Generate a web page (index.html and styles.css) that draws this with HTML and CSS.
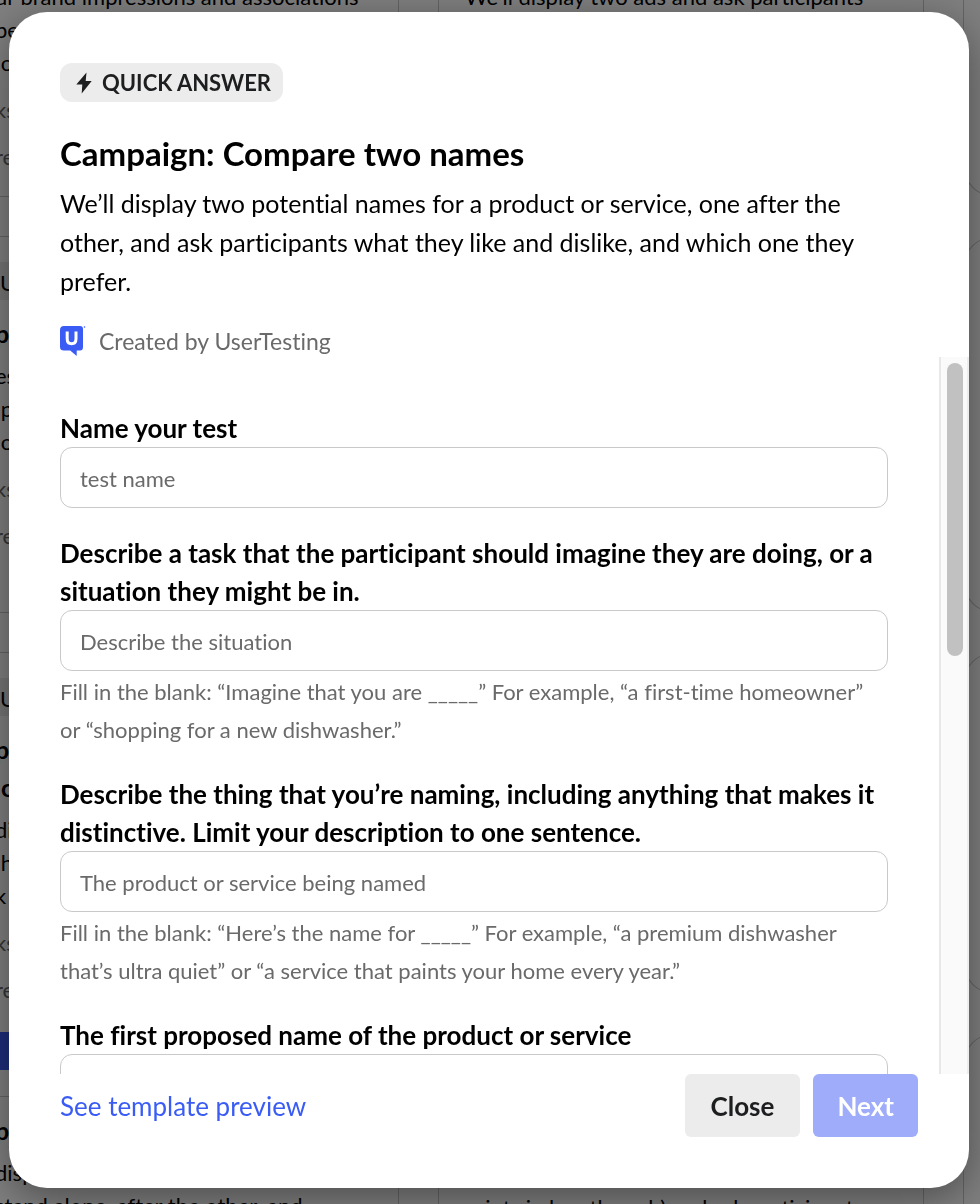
FILE: index.html
```html
<!DOCTYPE html>
<html lang="en">
<head>
    <meta charset="UTF-8">
    <meta name="viewport" content="width=device-width, initial-scale=1.0">
    <title>Campaign: Compare two names</title>
    <link rel="stylesheet" href="styles.css">
</head>
<body>
    <!-- Template gallery behind the dialog -->
    <div class="gallery" aria-hidden="true">
        <div class="column column-first">
            <div class="card card-cut">
                <p class="card-text">ur brand impressions and associations<br>pe<br>&nbsp;o</p>
                <p class="card-meta">ks</p>
                <p class="card-meta">re</p>
            </div>
            <div class="card">
                <div class="card-badge">U</div>
                <h3>pa</h3>
                <p class="card-text">es<br>&nbsp;p<br>&nbsp;o</p>
                <p class="card-meta">ks</p>
                <p class="card-meta">re</p>
            </div>
            <div class="card card-tall">
                <div class="card-badge">U</div>
                <h3>pa<br>&nbsp;c</h3>
                <p class="card-text">di<br>&nbsp;h<br>k</p>
                <p class="card-meta">ks</p>
                <p class="card-meta">re</p>
                <div class="card-button"></div>
                <div class="card-more">
                    <h3>pa</h3>
                    <p class="card-text">disp<br>stand alone, after the other, and</p>
                </div>
            </div>
        </div>
        <div class="column">
            <div class="card card-full">
                <p class="card-text">We’ll display two ads and ask participants</p>
                <p class="card-text">prints in length each) and ask participants</p>
            </div>
        </div>
        <div class="column column-last">
            <div class="card card-cut"></div>
            <div class="card"></div>
            <div class="card"></div>
            <div class="card card-tall"></div>
        </div>
    </div>

    <div class="overlay">
        <div class="modal" role="dialog" aria-labelledby="modalTitle">
            <div class="modal-header">
                <div class="badge">
                    <svg width="18" height="22" viewBox="0 0 18 22"><path d="M11.5 0.5 1.3 12.4h6L6.7 21.5 16.7 9h-6z" fill="#1d1e1f"/></svg>
                    QUICK ANSWER
                </div>
                <h1 id="modalTitle">Campaign: Compare two names</h1>
                <p class="description">We’ll display two potential names for a product or service, one after the other, and ask participants what they like and dislike, and which one they prefer.</p>
                <div class="author">
                    <svg width="26" height="30" viewBox="0 0 26 30">
                        <path d="M4 0h16q3 0 3 3v18q0 3.500-3 3.500h-3.300V30l-6.500-5.500H4q-4 0-4-3.500V4q0-4 4-4z" fill="#3a5cf5"/>
                        <path d="M7.200 5.500v7.300q0 5 4.400 5t4.400-5V5.500" fill="none" stroke="#fff" stroke-width="3"/>
                        <circle cx="24.500" cy="1" r="0.800" fill="#3a5cf5"/>
                    </svg>
                    <span>Created by UserTesting</span>
                </div>
            </div>

            <div class="modal-body">
                <form class="form" id="testForm">
                    <div class="form-group">
                        <label for="testName">Name your test</label>
                        <input type="text" id="testName" placeholder="test name">
                    </div>
                    <div class="form-group">
                        <label for="situation">Describe a task that the participant should imagine they are doing, or a situation they might be in.</label>
                        <input type="text" id="situation" placeholder="Describe the situation">
                        <p class="hint">Fill in the blank: “Imagine that you are _____” For example, “a first-time homeowner” or “shopping for a new dishwasher.”</p>
                    </div>
                    <div class="form-group">
                        <label for="product">Describe the thing that you’re naming, including anything that makes it distinctive. Limit your description to one sentence.</label>
                        <input type="text" id="product" placeholder="The product or service being named">
                        <p class="hint">Fill in the blank: “Here’s the name for _____” For example, “a premium dishwasher that’s ultra quiet” or “a service that paints your home every year.”</p>
                    </div>
                    <div class="form-group">
                        <label for="firstName">The first proposed name of the product or service</label>
                        <input type="text" id="firstName">
                    </div>
                </form>
                <div class="scroll-track"><div class="scroll-thumb"></div></div>
            </div>

            <div class="modal-footer">
                <a href="#preview">See template preview</a>
                <div class="actions">
                    <button type="button" class="btn">Close</button>
                    <button type="submit" class="btn btn-primary" form="testForm" disabled>Next</button>
                </div>
            </div>
        </div>
    </div>
</body>
</html>
```
FILE: styles.css
```css
* {
    box-sizing: border-box;
}

body {
    margin: 0;
    height: 100vh;
    overflow: hidden;
    font-family: Lato, "Liberation Sans", sans-serif;
    font-variant-ligatures: none;
    color: #000;
}

h1, h3, p {
    margin: 0;
}

/* gallery */
.gallery {
    display: grid;
    grid-template-columns: 399px 1fr 17px;
    column-gap: 39px;
    height: 100vh;
    overflow: hidden;
    background: #fff;
    font-size: 22px;
    line-height: 33px;
}

.column {
    min-width: 0;
    display: flex;
    flex-direction: column;
    gap: 39px;
}

.card {
    flex: none;
    height: 377px;
    padding-top: 25px;
    border: 1px solid #c9c9c9;
    white-space: nowrap;
    overflow: hidden;
}

.column-first .card {
    border-left: none;
}

.column-first p,
.column-first h3 {
    margin-left: -5px;
}

.column-last .card {
    border-right: none;
    border-radius: 32px 0 0 32px;
    width: 60px;
    height: 342px;
}

.column-last .card:nth-child(2) {
    height: 377px;
}

.gallery .card-cut {
    height: 197px;
    padding-top: 0;
    border-top: none;
    border-radius: 0;
}

.column-last .card-cut {
    border-radius: 0 0 0 32px;
}

.card-cut .card-text {
    margin-top: -20px;
}

.column-first .card-tall {
    height: 620px;
}

.card-full {
    height: 100vh;
    padding: 0 0 0 26px;
    border-top: none;
    border-bottom: none;
    display: flex;
    flex-direction: column;
    justify-content: space-between;
}

.card-full .card-text {
    margin: -20px 0;
}

.card-badge {
    height: 38px;
    line-height: 42px;
    background: #ececec;
    margin-bottom: 14px;
}

.card h3 {
    font-size: 25px;
    line-height: 38px;
    margin-bottom: 7px;
}

.card-meta {
    color: #6a6a6a;
    margin-top: 14px;
}

.card-button {
    height: 38px;
    margin-top: 26px;
    background: #3a5cf5;
}

.card-more {
    margin-top: 26px;
    padding-top: 14px;
    border-top: 1px solid #c9c9c9;
}

/* dialog */
.overlay {
    position: fixed;
    inset: 0;
    display: flex;
    padding: 12px 11px 16px 9px;
    background: rgba(0, 0, 0, 0.5);
}

.modal {
    flex: 1;
    min-width: 0;
    display: flex;
    flex-direction: column;
    background: #fff;
    border-radius: 38px;
    overflow: hidden;
    box-shadow: 0 10px 40px rgba(0, 0, 0, 0.4);
}

.modal-header {
    padding: 51px 81px 0 51px;
}

.badge {
    display: inline-flex;
    align-items: center;
    gap: 9px;
    height: 39px;
    padding: 0 12px 0 15px;
    border-radius: 12px;
    background: #ececec;
    color: #1d1e1f;
    font-size: 22px;
    font-weight: bold;
}

h1 {
    margin-top: 30px;
    font-size: 33px;
    line-height: 42px;
}

.description {
    margin-top: 10px;
    font-size: 25px;
    line-height: 39px;
}

.author {
    display: flex;
    align-items: center;
    gap: 13px;
    height: 32px;
    margin-top: 24px;
    font-size: 23px;
    color: #6a6a6a;
}

.modal-body {
    flex: 1;
    min-height: 0;
    display: flex;
}

.form {
    flex: 1;
    min-width: 0;
    padding: 52px 51px 0;
    overflow: hidden;
    display: flex;
    flex-direction: column;
    gap: 26px;
}

.form-group label {
    display: block;
    font-size: 26px;
    font-weight: bold;
    line-height: 38px;
}

.form-group input {
    display: block;
    width: 100%;
    height: 61px;
    padding: 1px 19px 0;
    border: 1px solid #c9c9c9;
    border-radius: 12px;
    background: #fff;
    font-family: inherit;
    font-variant-ligatures: none;
    font-size: 22px;
}

.form-group input::placeholder {
    color: #6a6a6a;
}

.hint {
    margin-top: 2px;
    font-size: 22px;
    line-height: 38px;
    color: #6a6a6a;
}

.scroll-track {
    width: 30px;
    padding: 6px;
    border-left: 2px solid #e8e8e8;
    border-right: 2px solid #ededed;
    background: #fafafa;
}

.scroll-thumb {
    width: 16px;
    height: 293px;
    border-radius: 8px;
    background: #c1c1c1;
}

.modal-footer {
    display: flex;
    align-items: center;
    justify-content: space-between;
    padding: 0 51px 51px;
}

.modal-footer a {
    color: #3a5cf5;
    font-size: 26px;
    text-decoration: none;
}

.actions {
    display: flex;
    gap: 13px;
}

.btn {
    height: 63px;
    padding: 0 26px;
    border: none;
    border-radius: 6px;
    background: #ececec;
    color: #1d1e1f;
    font-family: inherit;
    font-size: 26px;
    font-weight: bold;
    cursor: pointer;
}

.btn-primary {
    padding: 0 24px;
    background: #9eacfa;
    color: #fff;
}

.btn:disabled {
    cursor: default;
}
```
